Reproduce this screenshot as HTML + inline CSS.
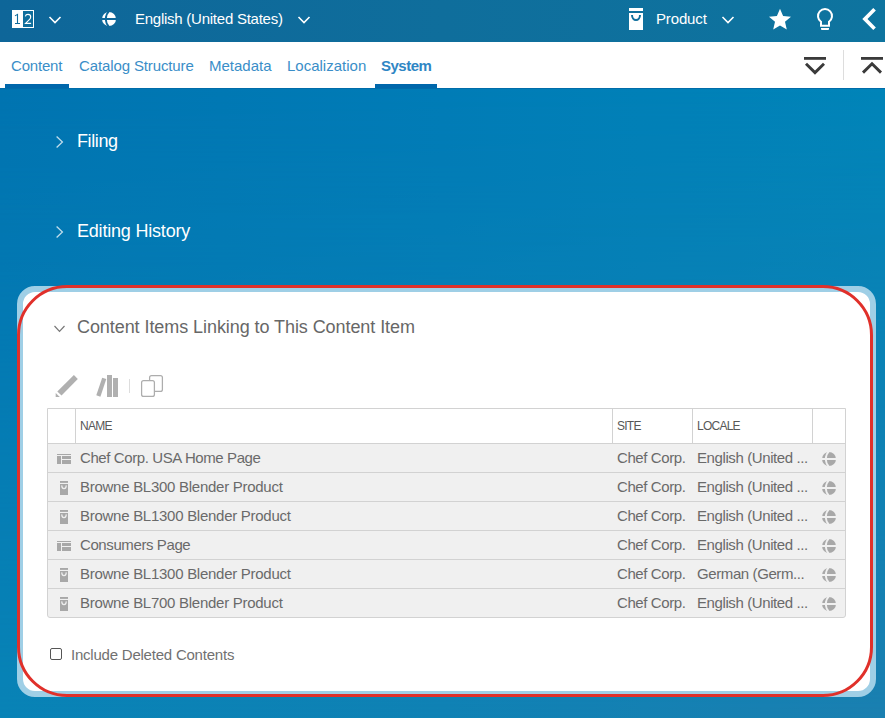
<!DOCTYPE html>
<html><head><meta charset="utf-8">
<style>
*{margin:0;padding:0;box-sizing:border-box}
html,body{width:885px;height:718px;overflow:hidden}
body{font-family:"Liberation Sans",sans-serif;position:relative;background:#0078b4}
#bgA{position:absolute;left:0;top:88px;width:885px;height:630px;background:linear-gradient(to right,#0074b1,#007cb7 50%,#0085b9)}
#bgB{position:absolute;left:0;top:88px;width:885px;height:630px;background:linear-gradient(to right,#0883b6,#0f82b4 50%,#1a7fb0);-webkit-mask-image:linear-gradient(to bottom,transparent,#000);mask-image:linear-gradient(to bottom,transparent,#000)}
.a{position:absolute;white-space:nowrap}
svg{position:absolute;overflow:visible}
#top{position:absolute;left:0;top:0;width:885px;height:42px;background:linear-gradient(to right,#0e6699,#0f6e9c 50%,#0e749f)}
#tabs{position:absolute;left:0;top:42px;width:885px;height:46px;background:#fff}
.tab{position:absolute;top:57px;font-size:15px;color:#3a8ec8;line-height:17px;white-space:nowrap}
.ul{position:absolute;top:84px;height:4px;background:#0067ab}
.sec{position:absolute;font-size:18px;color:#fff;line-height:20px;white-space:nowrap}
#panel{position:absolute;left:17px;top:286px;width:859px;height:411px;border:6px solid #9fcfe6;border-radius:18px;background:#fff}
#red{position:absolute;left:17px;top:285px;width:856px;height:412px;border:3px solid #e0302a;border-radius:50px}
.hl{position:absolute;left:47px;width:799px;height:1px;background:#cfcfcf}
.vl{position:absolute;top:408px;width:1px;background:#cfcfcf}
.row{position:absolute;left:48px;width:797px;height:28px;background:#f0f0f0}
.th{position:absolute;top:419px;font-size:12px;color:#585858;line-height:14px;white-space:nowrap;letter-spacing:-0.75px}
.td{position:absolute;font-size:15px;color:#6a6a6a;line-height:17px;white-space:nowrap;letter-spacing:-0.4px}
</style></head><body>
<div id="bgA"></div><div id="bgB"></div><div id="top"></div>
<div class="a" style="left:0;top:88px;width:885px;height:1px;background:#006ca9"></div>
<div id="tabs"></div>
<div class="tab" style="left:11px;letter-spacing:-0.2px">Content</div>
<div class="tab" style="left:79px;letter-spacing:-0.12px">Catalog Structure</div>
<div class="tab" style="left:209px">Metadata</div>
<div class="tab" style="left:287px">Localization</div>
<div class="tab" style="left:381px;font-weight:bold;letter-spacing:-0.5px;color:#2f86c4">System</div>
<div class="ul" style="left:5px;width:64px"></div>
<div class="ul" style="left:375px;width:62px"></div>

<div class="a" style="left:135px;top:10px;font-size:15px;color:#fff;line-height:17px;letter-spacing:-0.25px">English (United States)</div>
<div class="a" style="left:656px;top:10px;font-size:15px;color:#fff;line-height:17px;letter-spacing:-0.15px">Product</div>


<!-- top bar icons -->
<svg style="left:0;top:0" width="885" height="42" viewBox="0 0 885 42">
  <rect x="12" y="10" width="22" height="18" fill="#fff"/>
  <rect x="23" y="11" width="10" height="16" fill="#0f6e9c"/>
  <path d="M15,15.9 L17.5,14.4 V23.5 M15,23.5 H20" fill="none" stroke="#0f6a9b" stroke-width="1.1"/>
  <path d="M25.4,16.3 C25.6,15 26.6,14.4 28,14.4 C29.6,14.4 30.7,15.4 30.7,16.9 C30.7,18.1 30,19 29.1,19.9 L25.5,23.4 H31.1" fill="none" stroke="#fff" stroke-width="1.1"/>
  <polyline points="49.5,17 55,22.5 60.5,17" fill="none" stroke="#fff" stroke-width="1.6"/>
  <polyline points="298.5,17 304,22.5 309.5,17" fill="none" stroke="#fff" stroke-width="1.6"/>
  <polyline points="722.5,17 728,22.5 733.5,17" fill="none" stroke="#fff" stroke-width="1.6"/>
  <defs>
    <mask id="gm" maskUnits="userSpaceOnUse" x="-2" y="-2" width="20" height="20">
      <circle cx="7" cy="7" r="7" fill="#fff"/>
      <circle cx="14.85" cy="7" r="11.05" fill="none" stroke="#000" stroke-width="1.8"/>
      <rect x="-1" y="6" width="16" height="2" fill="#000"/>
    </mask>
    <symbol id="globe" viewBox="0 0 14 14"><rect x="0" y="0" width="14" height="14" mask="url(#gm)"/></symbol>
  </defs>
  <g transform="translate(102,12)" fill="#fff"><rect x="0" y="0" width="14" height="14" mask="url(#gm)"/></g>
  <!-- product -->
  <rect x="629" y="8" width="14" height="3" fill="#fff"/>
  <rect x="629" y="13" width="14" height="17" fill="#fff"/>
  <path d="M632,15 A4,5 0 0 0 640,15" fill="none" stroke="#0f6f9d" stroke-width="2"/>
  <!-- star -->
  <g transform="translate(769,8.7) scale(1.1) translate(-2,-2)"><path d="M12 17.27L18.18 21l-1.64-7.03L22 9.24l-7.19-.61L12 2 9.19 8.63 2 9.24l5.46 4.73L5.82 21z" fill="#fff"/></g>
  <!-- bulb -->
  <path d="M821,25.8 V21.74 A7,7 0 1 1 829,21.74 V25.8 Z" fill="none" stroke="#fff" stroke-width="2"/>
  <path d="M821,28 H829 V29 Q829,30 828,30 H822 Q821,30 821,29 Z" fill="#fff"/>
  <!-- back -->
  <g transform="translate(847.66,-2.98) scale(1.83)"><path d="M15.41 7.41L14 6l-6 6 6 6 1.41-1.41L10.83 12z" fill="#fff"/></g>
</svg>
<!-- tab bar icons -->
<svg style="left:0;top:42px" width="885" height="46" viewBox="0 42 885 46">
  <rect x="804" y="57" width="22" height="2.8" fill="#3a3a3a"/>
  <polyline points="806,63.8 815,72.6 824,63.8" fill="none" stroke="#3a3a3a" stroke-width="2.9"/>
  <rect x="843" y="50" width="1" height="30" fill="#ddd"/>
  <rect x="861" y="57" width="22" height="2.8" fill="#3a3a3a"/>
  <polyline points="863,72.6 872,63.8 881,72.6" fill="none" stroke="#3a3a3a" stroke-width="2.9"/>
</svg>
<!-- section chevrons -->
<svg style="left:0;top:0" width="885" height="718" viewBox="0 0 885 718">
  <polyline points="56.6,136.5 62.4,142 56.6,147.5" fill="none" stroke="rgba(255,255,255,0.75)" stroke-width="1.3"/>
  <polyline points="56.6,226.5 62.4,232 56.6,237.5" fill="none" stroke="rgba(255,255,255,0.75)" stroke-width="1.3"/>
</svg>
<div class="sec" style="left:77px;top:131px;letter-spacing:-0.4px">Filing</div>
<div class="sec" style="left:77px;top:221px;letter-spacing:-0.2px">Editing History</div>

<div id="panel"></div>
<div class="a" style="left:77px;top:317px;font-size:18px;color:#676767;line-height:20px;letter-spacing:-0.07px">Content Items Linking to This Content Item</div>

<!-- table -->
<div class="a" style="left:47px;top:408px;width:799px;height:210px;border:1px solid #d2d2d2;border-radius:0 0 3px 3px;background:#f0f0f0;overflow:hidden">
  <div class="a" style="left:0;top:0;width:797px;height:34px;background:#fff"></div>
  <div class="a" style="left:0;top:34px;width:797px;height:1px;background:#d2d2d2"></div>
  <div class="a" style="left:0;top:63px;width:797px;height:1px;background:#d2d2d2"></div>
  <div class="a" style="left:0;top:92px;width:797px;height:1px;background:#d2d2d2"></div>
  <div class="a" style="left:0;top:121px;width:797px;height:1px;background:#d2d2d2"></div>
  <div class="a" style="left:0;top:150px;width:797px;height:1px;background:#d2d2d2"></div>
  <div class="a" style="left:0;top:179px;width:797px;height:1px;background:#d2d2d2"></div>
  <div class="a" style="left:27px;top:0;width:1px;height:34px;background:#d2d2d2"></div>
  <div class="a" style="left:564px;top:0;width:1px;height:34px;background:#d2d2d2"></div>
  <div class="a" style="left:644px;top:0;width:1px;height:34px;background:#d2d2d2"></div>
  <div class="a" style="left:764px;top:0;width:1px;height:34px;background:#d2d2d2"></div>
</div>

<div class="th" style="left:80px">NAME</div>
<div class="th" style="left:617px">SITE</div>
<div class="th" style="left:697px">LOCALE</div>

<div class="td" style="left:80px;top:449px">Chef Corp. USA Home Page</div>
<div class="td" style="left:80px;top:478px;letter-spacing:-0.27px">Browne BL300 Blender Product</div>
<div class="td" style="left:80px;top:507px;letter-spacing:-0.27px">Browne BL1300 Blender Product</div>
<div class="td" style="left:80px;top:536px">Consumers Page</div>
<div class="td" style="left:80px;top:565px;letter-spacing:-0.27px">Browne BL1300 Blender Product</div>
<div class="td" style="left:80px;top:594px;letter-spacing:-0.27px">Browne BL700 Blender Product</div>
<div class="td" style="left:617px;top:449px">Chef Corp.</div>
<div class="td" style="left:617px;top:478px">Chef Corp.</div>
<div class="td" style="left:617px;top:507px">Chef Corp.</div>
<div class="td" style="left:617px;top:536px">Chef Corp.</div>
<div class="td" style="left:617px;top:565px">Chef Corp.</div>
<div class="td" style="left:617px;top:594px">Chef Corp.</div>
<div class="td" style="left:697px;top:449px">English (United ...</div>
<div class="td" style="left:697px;top:478px">English (United ...</div>
<div class="td" style="left:697px;top:507px">English (United ...</div>
<div class="td" style="left:697px;top:536px">English (United ...</div>
<div class="td" style="left:697px;top:565px">German (Germ...</div>
<div class="td" style="left:697px;top:594px">English (United ...</div>

<div class="a" style="left:50px;top:648px;width:12px;height:12px;border:1px solid #555;border-radius:2px"></div>
<div class="a" style="left:71px;top:646px;font-size:15px;color:#717171;line-height:17px;letter-spacing:-0.22px">Include Deleted Contents</div>


<svg style="left:0;top:0" width="885" height="718" viewBox="0 0 885 718">
  <polyline points="54.5,326 59.5,331.3 64.5,326" fill="none" stroke="#777" stroke-width="1.2"/>
  <g fill="#b0b0b0">
    <polygon points="73.9,374.9 77.8,379 61.5,395.6 57.3,391.5"/>
    <polygon points="55.7,392.9 55.7,397 59.8,397"/>
    <polygon points="96.3,395.3 100.4,396.7 106.3,379 102.2,377.7"/>
    <rect x="107" y="375" width="5" height="22"/>
    <rect x="113" y="378" width="5" height="19"/>
  </g>
  <rect x="129" y="379" width="1" height="14" fill="#ddd"/>
  <rect x="149.6" y="375.6" width="12.8" height="15.8" rx="2" fill="none" stroke="#adadad" stroke-width="1.25"/>
  <rect x="141.6" y="380.6" width="12.8" height="15.8" rx="2" fill="#fff" stroke="#adadad" stroke-width="1.25"/>
  <defs>
    <g id="pg" fill="#a8a8a8"><rect x="0" y="0" width="14" height="1"/><rect x="0" y="2" width="4" height="8"/><rect x="5" y="2" width="9" height="3"/><rect x="5" y="6" width="9" height="4"/></g>
    <g id="pr"><rect x="0" y="0" width="8" height="1.9" fill="#a8a8a8"/><rect x="0" y="3" width="8" height="11" fill="#a8a8a8"/><path d="M1.7,4.4 Q1.9,7.7 4,7.7 Q6.1,7.7 6.3,4.4" fill="none" stroke="#f0f0f0" stroke-width="1.15"/></g>
    <g id="gl" fill="#a8a8a8"><rect x="0" y="0" width="14" height="14" mask="url(#gm)"/></g>
  </defs>
  <use href="#pg" x="57" y="454"/>
  <use href="#pr" x="60" y="481"/>
  <use href="#pr" x="60" y="510"/>
  <use href="#pg" x="57" y="541"/>
  <use href="#pr" x="60" y="568"/>
  <use href="#pr" x="60" y="597"/>
  <use href="#gl" x="822" y="452"/>
  <use href="#gl" x="822" y="481"/>
  <use href="#gl" x="822" y="510"/>
  <use href="#gl" x="822" y="539"/>
  <use href="#gl" x="822" y="568"/>
  <use href="#gl" x="822" y="597"/>
</svg>
<div id="red"></div>
</body></html>
